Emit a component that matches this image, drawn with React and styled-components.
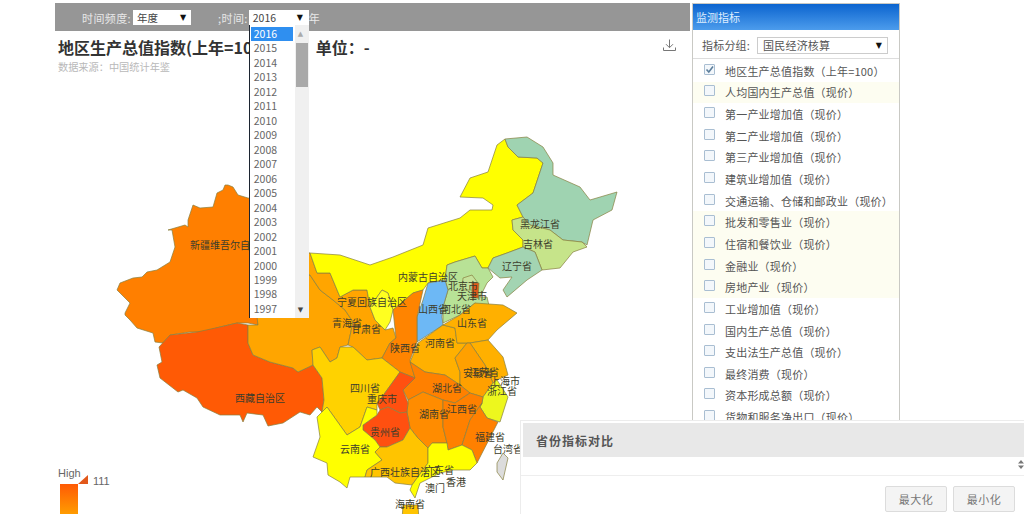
import React from "react";
import styled, { createGlobalStyle } from "styled-components";

const Global = createGlobalStyle`
  html, body { margin: 0; padding: 0; background: #fff; }
  body { font-family: "Noto Sans CJK SC", "Liberation Sans", sans-serif; overflow: hidden; }
  #root { height: 514px; }
`;

const Page = styled.div`
  position: relative;
  width: 1024px;
  height: 514px;
  overflow: hidden;
  display: flex;
  align-items: flex-start;
  padding: 3px 0 0 55px;
  box-sizing: border-box;
  background: #fff;
`;
const Main = styled.div`
  width: 635px;
  display: flex;
  flex-direction: column;
  flex: none;
`;
const Toolbar = styled.div`
  height: 28px;
  background: #969696;
  display: flex;
  align-items: center;
  padding: 1px 0 0 27px;
  box-sizing: border-box;
  color: #e8e8e8;
  font-size: 11px;
`;
const ToolLabel = styled.span`
  margin-left: ${(p) => p.$gap || 0}px;
  white-space: nowrap;
  letter-spacing: 0.4px;
`;
const SelectBox = styled.div`
  position: relative;
  width: ${(p) => p.$w}px;
  height: 15px;
  margin-left: ${(p) => p.$gap || 0}px;
  background: #fff;
  color: #444;
  font-size: 10.5px;
  line-height: 16px;
  padding-left: 4px;
  box-sizing: border-box;
  flex: none;
`;
const Arrow = styled.span`
  position: absolute;
  right: ${(p) => p.$r || 5}px;
  top: 0;
  color: #111;
  font-size: 8px;
  line-height: 15px;
  font-family: "DejaVu Sans", sans-serif;
`;
const Dropdown = styled.div`
  position: absolute;
  left: 0;
  top: 15px;
  width: 60px;
  height: 293px;
  background: #fff;
  border-left: 1.5px solid #1c2430;
  box-sizing: border-box;
  padding: 2px 0 0 1px;
  z-index: 5;
`;
const YearItem = styled.div`
  width: 42px;
  height: 14.47px;
  line-height: 14.47px;
  font-size: 10.5px;
  padding-left: 3px;
  box-sizing: border-box;
  color: ${(p) => (p.$active ? "#fff" : "#666")};
  background: ${(p) => (p.$active ? "#2f8ff0" : "transparent")};
`;
const ScrollTrack = styled.div`
  position: absolute;
  right: 0;
  top: 0;
  bottom: 0;
  width: 14px;
  background: #f0f0f0;
`;
const ScrollThumb = styled.div`
  position: absolute;
  left: 1px;
  right: 1px;
  top: 18px;
  height: 44px;
  background: #a9a9a9;
`;
const ScrollGlyph = styled.span`
  position: absolute;
  left: 3px;
  ${(p) => (p.$down ? "bottom: 3px;" : "top: 5px;")}
  font-size: 7px;
  line-height: 9px;
  color: ${(p) => (p.$down ? "#444" : "#aaa")};
  font-family: "DejaVu Sans", sans-serif;
`;
const TitleRow = styled.div`
  display: flex;
  align-items: flex-start;
  justify-content: space-between;
  padding: 5px 14px 0 3px;
  height: 26px;
  box-sizing: border-box;
`;
const Heading = styled.h1`
  margin: 0;
  font-size: 16px;
  line-height: 23px;
  font-weight: 700;
  color: #333;
  white-space: nowrap;
`;
const Unit = styled.span`
  margin-left: 48px;
`;
const DownloadSlot = styled.span`
  display: flex;
  margin-top: 3px;
`;
const Source = styled.div`
  padding: 2px 0 0 3px;
  height: 23px;
  box-sizing: border-box;
  font-size: 10.2px;
  line-height: 15px;
  color: #b9b9b9;
`;
const MapSvg = styled.svg`
  display: block;
  flex: none;
`;
const Region = styled.polygon`
  stroke: #87803f;
  stroke-width: 0.7;
  stroke-linejoin: round;
`;
const RegionLabel = styled.text`
  font-family: "Noto Sans CJK SC", sans-serif;
  font-size: 10px;
  fill: #3d3d2c;
  text-anchor: middle;
`;
const LegendText = styled.text`
  font-family: "Liberation Sans", sans-serif;
  font-size: 11px;
  fill: #666;
`;
const Side = styled.aside`
  width: 208px;
  margin-left: 2px;
  flex: none;
  height: 440px;
  border: 1px solid #c9c9c4;
  box-sizing: border-box;
  display: flex;
  flex-direction: column;
  background: #fff;
`;
const SideTitle = styled.div`
  height: 26px;
  background: linear-gradient(#0b64cf, #4c9cec);
  color: #dfeeff;
  font-size: 11px;
  line-height: 26px;
  padding-left: 3px;
`;
const GroupRow = styled.div`
  height: 29px;
  display: flex;
  align-items: center;
  padding: 2px 0 0 9px;
  box-sizing: border-box;
  font-size: 11px;
  letter-spacing: 0.2px;
  color: #555;
  border-bottom: 1px solid #ddd;
`;
const GroupSelect = styled.div`
  position: relative;
  width: 131px;
  height: 17px;
  margin-left: 7px;
  border: 1px solid #ccc;
  box-sizing: border-box;
  font-size: 11px;
  line-height: 15px;
  padding-left: 5px;
  color: #555;
`;
const List = styled.ul`
  list-style: none;
  margin: 1px 0 0;
  padding: 0;
`;
const Row = styled.li`
  height: 21.65px;
  display: flex;
  align-items: center;
  padding-left: 11px;
  font-size: 11px;
  letter-spacing: 0.2px;
  color: #555;
  white-space: nowrap;
  background: ${(p) => (p.$tint ? "#fdfdf1" : "transparent")};
`;
const Check = styled.span`
  width: 11px;
  height: 11px;
  box-sizing: border-box;
  border: 1px solid #a9bed2;
  border-radius: 1px;
  background: #f3f7fb;
  margin: -3px 10px 0 0;
  display: flex;
  flex: none;
`;
const Dialog = styled.section`
  position: absolute;
  left: 520px;
  top: 420px;
  width: 510px;
  height: 100px;
  background: #fff;
  border: 1px solid #ececec;
  box-sizing: border-box;
  padding: 2px 0 0 2px;
  z-index: 6;
`;
const DialogHead = styled.div`
  height: 34px;
  background: #e8e8e8;
  font-size: 12px;
  letter-spacing: 1px;
  font-weight: 700;
  line-height: 36px;
  padding-left: 13px;
  color: #555;
`;
const DialogBody = styled.div`
  position: relative;
  height: 18px;
  margin-left: -2px;
  border-bottom: 1px solid #eee;
`;
const Handle = styled.svg`
  position: absolute;
  left: 497px;
  top: 3px;
`;
const DialogFoot = styled.div`
  display: flex;
  gap: 6px;
  padding: 10px 0 0 362px;
`;
const FootButton = styled.button`
  width: 62px;
  height: 26px;
  padding: 0;
  background: #f4f4f4;
  border: 1px solid #dcdcdc;
  border-radius: 2px;
  font-family: inherit;
  font-size: 11px;
  letter-spacing: 0.5px;
  color: #777;
`;

const years = Array.from({ length: 20 }, (_, i) => 2016 - i);
const indicators = [
  ["地区生产总值指数（上年=100）", false, true],
  ["人均国内生产总值（现价）", true],
  ["第一产业增加值（现价）"],
  ["第二产业增加值（现价）"],
  ["第三产业增加值（现价）"],
  ["建筑业增加值（现价）"],
  ["交通运输、仓储和邮政业（现价）"],
  ["批发和零售业（现价）", true],
  ["住宿和餐饮业（现价）", true],
  ["金融业（现价）", true],
  ["房地产业（现价）", true],
  ["工业增加值（现价）"],
  ["国内生产总值（现价）"],
  ["支出法生产总值（现价）"],
  ["最终消费（现价）"],
  ["资本形成总额（现价）"],
  ["货物和服务净出口（现价）"],
];

const regions = [
  ["#ff7f00", "228,185 233,187 238,195 248,198 262,200 270,250 262,300 258,318 258,325 248,323 237,323 220,327 203,332 190,332 170,335 163,343 155,342 153,333 137,328 130,320 125,315 125,313 130,303 120,293 117,290 120,283 133,278 142,277 147,272 157,270 170,262 175,247 172,230 168,230 185,225 188,227 188,220 193,205 200,208 213,207 217,193 223,190 225,185"],
  ["#ff5a05", "170,335 197,332 220,327 237,323 248,325 248,343 253,355 270,362 293,368 298,372 313,365 322,378 324,400 322,412 317,407 310,415 300,412 283,423 268,426 263,415 247,413 243,422 240,415 220,415 203,407 197,398 183,390 178,392 160,378 157,365 162,362 159,347"],
  ["#ffa500", "250,260 310,275 320,290 333,300 345,310 353,322 348,345 340,347 337,358 330,362 320,347 312,350 313,365 298,372 293,368 270,362 253,355 248,343 248,325 258,325"],
  ["#ffa500", "250,235 310,253 317,273 330,273 340,297 353,290 367,290 370,307 375,320 385,330 393,328 396,338 390,343 382,358 367,360 353,347 348,345 353,322 345,310 333,300 320,290 310,275 250,260"],
  ["#ffff00", "497,145 505,139 508,147 518,157 537,158 543,163 533,193 517,205 523,217 512,220 513,230 523,240 523,247 507,253 493,258 488,268 482,268 475,256 455,262 447,265 445,280 428,283 423,290 413,293 393,310 388,293 382,290 370,307 367,290 353,290 340,297 330,273 317,273 310,253 340,255 370,265 393,257 423,245 428,228 460,218 470,210 492,210 493,205 483,198 460,197 470,178 488,172"],
  ["#ffff20", "370,307 382,290 388,293 393,310 390,322 385,330 375,320"],
  ["#9fd3b1", "508,147 505,139 527,137 543,147 553,163 553,175 580,187 590,200 617,192 612,210 593,220 587,245 582,242 563,240 550,230 530,225 523,217 517,205 533,193 543,163 537,158 518,157"],
  ["#c6e48a", "512,220 523,217 530,225 550,230 563,240 582,242 587,247 573,252 560,268 542,270 535,252 523,247 523,240 513,230"],
  ["#a3d4b2", "488,268 493,258 507,253 523,247 535,252 542,270 527,280 507,297 503,290 512,277 500,278"],
  ["#b8e296", "447,265 455,262 475,256 482,268 488,268 493,277 487,283 480,297 487,297 490,310 475,303 460,315 443,323 443,307 448,290 445,280"],
  ["#c5e29a", "463,278 472,275 478,283 472,290 462,290"],
  ["#e2581a", "472,283 479,283 478,298 472,298"],
  ["#6db8f5", "428,283 445,280 448,290 443,307 442,317 443,325 417,342 417,317 423,300"],
  ["#ff8400", "393,310 413,293 423,290 417,317 417,342 410,360 415,378 400,372 382,358 390,343 396,338"],
  ["#ffb000", "418,343 443,325 455,328 457,343 467,343 455,358 460,372 460,385 445,375 425,372 410,362"],
  ["#ffb000", "443,325 460,315 475,303 503,305 517,313 497,330 488,340 470,343 457,343 455,328"],
  ["#ffb000", "470,343 488,340 503,357 508,375 497,380 493,383 485,365"],
  ["#ffa000", "467,343 470,343 485,365 493,383 483,397 470,393 460,385 460,372 455,358"],
  ["#edf71e", "482,403 483,397 493,383 497,380 508,397 500,422 487,418 480,407"],
  ["#ff8000", "415,378 410,362 425,372 445,375 460,385 470,393 455,403 443,400 423,392 408,400 403,390"],
  ["#ff8c00", "408,403 408,400 423,392 443,400 443,427 447,443 432,443 428,448 417,437 410,428 407,412"],
  ["#ff8000", "443,400 455,403 470,393 483,397 482,403 470,420 462,445 448,450 447,443 443,427"],
  ["#ff8000", "482,403 480,407 487,418 498,422 477,463 472,450 462,445 470,420"],
  ["#ffd200", "312,350 320,347 330,362 337,358 340,347 353,347 367,360 382,358 400,372 382,397 377,403 377,410 367,407 360,427 347,435 327,407 322,412 324,400 322,378 313,365"],
  ["#ff5010", "400,372 415,378 403,390 408,403 407,412 400,413 388,407 380,410 377,403 382,397"],
  ["#ff5010", "363,425 377,415 380,410 388,407 400,413 407,412 410,428 403,440 387,447 380,447 375,440 363,430"],
  ["#ffff00", "327,407 347,435 360,427 367,407 377,410 377,415 363,425 363,430 375,440 380,447 375,452 382,460 367,470 365,477 350,477 347,488 340,482 328,475 327,463 313,457 320,437 317,417 322,412"],
  ["#ffc400", "380,447 387,447 403,440 410,428 417,437 428,448 428,463 412,485 395,483 387,477 365,477 367,470 382,460 375,452"],
  ["#ffff00", "428,448 432,443 447,443 448,450 462,445 472,450 477,463 470,470 453,470 440,473 420,483 415,498 410,490 412,485 428,463"],
  ["#ffc400", "402,520 403,505 418,505 419,520"],
  ["#dcdcdc", "503,453 508,458 503,480 497,472 497,463"],
];

const labels = [
  ["新疆维吾尔自治区", 230, 249],
  ["黑龙江省", 540, 228],
  ["吉林省", 538, 248],
  ["辽宁省", 517, 270],
  ["内蒙古自治区", 428, 281],
  ["北京市", 463, 290],
  ["天津市", 472, 300],
  ["宁夏回族自治区", 372, 306],
  ["山西省", 433, 313],
  ["河北省", 456, 313],
  ["青海省", 347, 327],
  ["山东省", 472, 327],
  ["甘肃省", 366, 333],
  ["河南省", 440, 347],
  ["陕西省", 405, 352],
  ["安徽省", 478, 377],
  ["江苏省", 484, 376],
  ["上海市", 505, 385],
  ["四川省", 365, 392],
  ["湖北省", 447, 392],
  ["浙江省", 502, 395],
  ["西藏自治区", 260, 402],
  ["重庆市", 382, 403],
  ["江西省", 462, 413],
  ["湖南省", 434, 418],
  ["贵州省", 385, 436],
  ["福建省", 490, 441],
  ["云南省", 355, 453],
  ["台湾省", 508, 453],
  ["广西壮族自治区", 405, 476],
  ["广东省", 439, 474],
  ["香港", 456, 486],
  ["澳门", 435, 492],
  ["海南省", 410, 508],
];

const Tick = () => (
  <svg width="9" height="9" viewBox="0 0 9 9">
    <path d="M1.5 4.5 L3.8 7 L8 1.5" fill="none" stroke="#5d7f9c" strokeWidth="1.6" />
  </svg>
);
const DownloadIcon = () => (
  <svg width="13" height="13" viewBox="0 0 13 13" fill="none" stroke="#777" strokeWidth="1">
    <path d="M6.5 0.5 V8.5 M3 5.2 L6.5 8.7 L10 5.2 M0.5 8.5 V11.5 H12.5 V8.5" />
  </svg>
);

export default function App() {
  return (
    <Page>
      <Global />
      <Main>
        <Toolbar>
          <ToolLabel>时间频度:</ToolLabel>
          <SelectBox $w={58} $gap={2}>
            年度
            <Arrow>▼</Arrow>
          </SelectBox>
          <ToolLabel $gap={27}>;时间:</ToolLabel>
          <SelectBox $w={60} $gap={1}>
            2016
            <Arrow $r={6}>▼</Arrow>
            <Dropdown>
              {years.map((y, i) => (
                <YearItem key={y} $active={i === 0}>
                  {y}
                </YearItem>
              ))}
              <ScrollTrack>
                <ScrollGlyph>▲</ScrollGlyph>
                <ScrollThumb />
                <ScrollGlyph $down>▼</ScrollGlyph>
              </ScrollTrack>
            </Dropdown>
          </SelectBox>
          <ToolLabel>年</ToolLabel>
        </Toolbar>
        <TitleRow>
          <Heading>
            地区生产总值指数(上年=100)<Unit>单位：-</Unit>
          </Heading>
          <DownloadSlot>
            <DownloadIcon />
          </DownloadSlot>
        </TitleRow>
        <Source>数据来源：中国统计年鉴</Source>
        <MapSvg width="635" height="434" viewBox="55 80 635 434">
          <defs>
            <linearGradient id="legend" x1="0" y1="0" x2="0" y2="1">
              <stop offset="0" stopColor="#ff5a05" />
              <stop offset="1" stopColor="#ffa500" />
            </linearGradient>
          </defs>
          {regions.map(([fill, points], i) => (
            <Region key={i} fill={fill} points={points} />
          ))}
          {labels.map(([name, x, y]) => (
            <RegionLabel key={name} x={x} y={y}>
              {name}
            </RegionLabel>
          ))}
          <LegendText x="58" y="477">High</LegendText>
          <polygon points="78,484 88,475 88,484" fill="#e2581a" />
          <rect x="60" y="484" width="18" height="34" fill="url(#legend)" />
          <LegendText x="93" y="485">111</LegendText>
        </MapSvg>
      </Main>
      <Side>
        <SideTitle>监测指标</SideTitle>
        <GroupRow>
          指标分组:
          <GroupSelect>
            国民经济核算
            <Arrow $r={5}>▼</Arrow>
          </GroupSelect>
        </GroupRow>
        <List>
          {indicators.map(([name, tint, checked]) => (
            <Row key={name} $tint={tint}>
              <Check>{checked && <Tick />}</Check>
              {name}
            </Row>
          ))}
        </List>
      </Side>
      <Dialog>
        <DialogHead>省份指标对比</DialogHead>
        <DialogBody>
          <Handle width="6" height="9" viewBox="0 0 6 9">
            <path d="M3 0 L6 3.5 H0 Z M3 9 L6 5.5 H0 Z" fill="#777" />
          </Handle>
        </DialogBody>
        <DialogFoot>
          <FootButton>最大化</FootButton>
          <FootButton>最小化</FootButton>
        </DialogFoot>
      </Dialog>
    </Page>
  );
}
